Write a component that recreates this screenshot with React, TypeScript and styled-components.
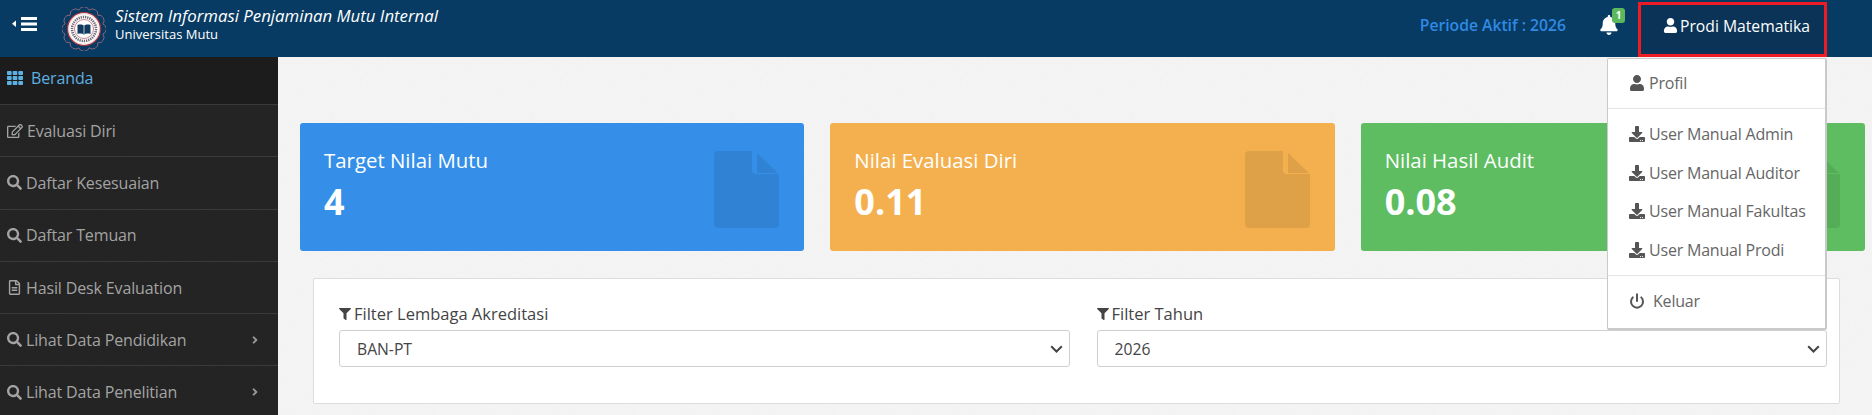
import React from 'react';
import styled, { createGlobalStyle } from 'styled-components';
import { Power } from 'lucide-react';
import {
  FaAngleRight,
  FaBell,
  FaDownload,
  FaFilter,
  FaRegEdit,
  FaRegFileAlt,
  FaSearch,
  FaTh,
  FaUser,
} from 'react-icons/fa';

const grain = (alpha: number, tone: number) =>
  `url("data:image/svg+xml,%3Csvg xmlns='http://www.w3.org/2000/svg' width='200' height='200'%3E%3Cfilter id='n'%3E%3CfeTurbulence type='fractalNoise' baseFrequency='0.8' numOctaves='2'/%3E%3CfeColorMatrix values='0 0 0 0 ${tone} 0 0 0 0 ${tone} 0 0 0 0 ${tone} 0 0 0 ${alpha} 0'/%3E%3C/filter%3E%3Crect width='200' height='200' filter='url(%23n)'/%3E%3C/svg%3E")`;

const chevron = `url("data:image/svg+xml,%3Csvg xmlns='http://www.w3.org/2000/svg' viewBox='0 0 13 8'%3E%3Cpath d='M1.200 1.200l5.300 5.300 5.300-5.300' fill='none' stroke='%23444' stroke-width='2'/%3E%3C/svg%3E")`;

const GlobalStyle = createGlobalStyle`
  html, body {
    margin: 0;
    padding: 0;
    height: 415px;
    overflow: hidden;
    background: #f7f7f7;
    font-family: 'Open Sans', 'Liberation Sans', sans-serif;
  }
  * { box-sizing: border-box; }
`;

const Page = styled.div`
  width: 1872px;
  height: 415px;
  display: flex;
  flex-direction: column;
  overflow: hidden;
`;

const Header = styled.header`
  flex: 0 0 57px;
  display: flex;
  align-items: center;
  background: #073b63;
  color: #fff;
`;

const Toggle = styled.svg`
  width: 25px;
  height: 14px;
  margin: -9px 25px 0 12px;
`;

const Seal = styled.svg`
  width: 44px;
  height: 44px;
  margin: 0 9px 0 0;
`;

const Brand = styled.div`
  display: flex;
  flex-direction: column;
`;

const BrandTitle = styled.div`
  font-size: 16.8px;
  font-style: italic;
  line-height: 21px;
  margin-top: -9px;
`;

const BrandSub = styled.div`
  font-size: 13px;
  line-height: 17px;
`;

const HeaderRight = styled.div`
  margin-left: auto;
  height: 100%;
  display: flex;
  align-items: center;
  padding-right: 45px;
`;

const Period = styled.span`
  margin-top: -8px;
  font-size: 15.7px;
  font-weight: 600;
  color: #2f8ae4;
`;

const BellWrap = styled.div`
  position: relative;
  display: flex;
  margin: -8px 19px 0 33px;
  font-size: 20px;
`;

const BellBadge = styled.span`
  position: absolute;
  top: -7px;
  right: -6px;
  width: 13px;
  height: 15px;
  border-radius: 3px;
  background: #5cb85c;
  color: #fff;
  font-size: 10px;
  font-weight: 700;
  line-height: 15px;
  text-align: center;
`;

const UserMenu = styled.div`
  position: relative;
  width: 189px;
  height: 55px;
  margin-top: 1px;
  display: flex;
  align-items: center;
  gap: 2px;
  padding: 0 0 7px 22px;
  background: #0a3357;
  border: 3px solid #ed1c24;
  font-size: 15.7px;
`;

const Dropdown = styled.div`
  position: absolute;
  top: 53px;
  right: -3px;
  width: 220px;
  z-index: 10;
  padding: 5px 0 7px;
  background: #fff;
  border: 1px solid #c9c9c9;
  border-width: 1px 2px 2px 1px;
  border-radius: 2px;
`;

const MenuItem = styled.div`
  height: 38.5px;
  display: flex;
  align-items: center;
  gap: 4px;
  padding-left: 21px;
  color: #666;
  font-size: 16px;
  letter-spacing: -0.2px;
  svg { color: #555; flex: none; }
`;

const MenuDivider = styled.div`
  height: 1px;
  margin: 6px 0;
  background: #e5e5e5;
`;

const Body = styled.div`
  flex: 1;
  display: flex;
  min-height: 0;
  background-color: #f7f7f7;
  background-image: ${grain(0.03, 0)};
`;

const Sidebar = styled.nav`
  flex: 0 0 278px;
  background-color: #262626;
  background-image: ${grain(0.12, 0)};
`;

const SideItem = styled.div<{ $active?: boolean }>`
  height: ${(p) => (p.$active ? '48px' : '52.3px')};
  display: flex;
  align-items: center;
  gap: 4px;
  padding: ${(p) => (p.$active ? '0 0 6px 7px' : '0 0 0 7px')};
  background: ${(p) => (p.$active ? 'rgba(0, 0, 0, 0.2)' : 'transparent')};
  border-bottom: 1px solid #3a3a3a;
  color: ${(p) => (p.$active ? '#5cb0e2' : '#a3a3a3')};
  font-size: 16px;
  letter-spacing: -0.14px;
  svg { flex: none; }
`;

const SideArrow = styled(FaAngleRight)`
  margin-left: auto;
  margin-right: 17px;
  font-size: 12px;
  color: #999;
`;

const Main = styled.main`
  flex: 1;
  padding: 66px 7px 0 22px;
`;

const Cards = styled.div`
  display: grid;
  grid-template-columns: repeat(3, 1fr);
  gap: 26px;
`;

const Card = styled.div<{ $color: string }>`
  height: 128px;
  display: flex;
  justify-content: space-between;
  align-items: center;
  padding: 0 25px 0 24px;
  border-radius: 3px;
  background: ${(p) => p.$color};
  color: #fff;
`;

const CardText = styled.div`
  padding-bottom: 3px;
`;

const CardLabel = styled.div`
  font-size: 20.4px;
  line-height: 24px;
`;

const CardValue = styled.div`
  margin-top: 8px;
  font-size: 36px;
  font-weight: 700;
  line-height: 44px;
`;

const CardIcon = styled.svg`
  width: 65px;
  height: 77px;
  margin-top: 5px;
  opacity: 0.08;
`;

const FilterPanel = styled.section`
  display: grid;
  grid-template-columns: 1fr 1fr;
  gap: 27px;
  height: 126px;
  margin: 27px 25px 0 13px;
  padding: 25px 12px 0 25px;
  background: #fff;
  border: 1px solid #dcdcdc;
  border-radius: 2px;
`;

const Field = styled.div`
  display: flex;
  flex-direction: column;
`;

const FieldLabel = styled.label`
  display: flex;
  align-items: center;
  gap: 3px;
  height: 27px;
  margin-top: -1px;
  padding-bottom: 6px;
  color: #444;
  font-size: 16.5px;
  font-weight: 500;
`;

const Select = styled.select`
  width: 100%;
  height: 37px;
  padding: 0 30px 0 17px;
  appearance: none;
  background: #fff ${chevron} no-repeat right 6px center / 13px 8px;
  border: 1px solid #cfcfcf;
  border-radius: 3px;
  color: #444;
  font-family: inherit;
  font-size: 15.7px;
`;

const sideItems = [
  { label: 'Evaluasi Diri', icon: <FaRegEdit size={16} /> },
  { label: 'Daftar Kesesuaian', icon: <FaSearch size={15} /> },
  { label: 'Daftar Temuan', icon: <FaSearch size={15} /> },
  { label: 'Hasil Desk Evaluation', icon: <FaRegFileAlt size={15} /> },
  { label: 'Lihat Data Pendidikan', icon: <FaSearch size={15} />, more: true },
  { label: 'Lihat Data Penelitian', icon: <FaSearch size={15} />, more: true },
];

const cards = [
  { label: 'Target Nilai Mutu', value: '4', color: '#358fe8' },
  { label: 'Nilai Evaluasi Diri', value: '0.11', color: '#f4b04f' },
  { label: 'Nilai Hasil Audit', value: '0.08', color: '#5dbd60' },
];

const manuals = ['Admin', 'Auditor', 'Fakultas', 'Prodi'];

// scalloped edge of the university seal
const scallopPath = () => {
  const pts = Array.from({ length: 12 }, (_, i) => {
    const a = ((i + 0.5) * Math.PI) / 6;
    return `${(22 + 19.5 * Math.cos(a)).toFixed(2)} ${(22 + 19.5 * Math.sin(a)).toFixed(2)}`;
  });
  return `M${pts[0]} ` + pts.slice(1).concat(pts[0]).map((p) => `A5.4 5.4 0 0 1 ${p}`).join(' ') + 'Z';
};

const App = () => {
  return (
    <Page>
      <GlobalStyle />
      <Header>
        <Toggle viewBox="0 0 25 14" fill="#fff">
          <path d="M4 3.500V10L0 6.800z" />
          <rect x="9" y="0" width="16" height="3" />
          <rect x="9" y="5.500" width="16" height="3" />
          <rect x="9" y="11" width="16" height="3" />
        </Toggle>
        <Seal viewBox="0 0 44 44">
          <path d={scallopPath()} fill="none" stroke="#a9707c" strokeWidth="0.8" />
          <circle cx="22" cy="22" r="16.500" fill="#f6e4e0" stroke="#a8333f" strokeWidth="1.200" />
          <circle cx="22" cy="22" r="14.500" fill="#fff" />
          <circle cx="22" cy="22" r="12" fill="none" stroke="#6f6a78" strokeWidth="2.600" strokeDasharray="1.300 0.900" />
          <circle cx="22" cy="22" r="9.500" fill="#fff" stroke="#b0505a" strokeWidth="0.700" />
          <path d="M15.500 18c2.600-.8 5.400-.4 6.500 1 1.100-1.400 3.900-1.800 6.500-1v9c-2.600-.8-5.400-.4-6.500 1-1.100-1.400-3.900-1.800-6.500-1z" fill="#123a5e" />
          <path d="M22 19v9" stroke="#fff" strokeWidth="0.700" />
        </Seal>
        <Brand>
          <BrandTitle>Sistem Informasi Penjaminan Mutu Internal</BrandTitle>
          <BrandSub>Universitas Mutu</BrandSub>
        </Brand>
        <HeaderRight>
          <Period>Periode Aktif : 2026</Period>
          <BellWrap>
            <FaBell />
            <BellBadge>1</BellBadge>
          </BellWrap>
          <UserMenu>
            <FaUser size={15} />
            Prodi Matematika
            <Dropdown>
              <MenuItem>
                <FaUser size={16} />
                Profil
              </MenuItem>
              <MenuDivider />
              {manuals.map((m) => (
                <MenuItem key={m}>
                  <FaDownload size={16} />
                  User Manual {m}
                </MenuItem>
              ))}
              <MenuDivider />
              <MenuItem>
                <Power size={16} strokeWidth={3} style={{ marginRight: 4 }} />
                Keluar
              </MenuItem>
            </Dropdown>
          </UserMenu>
        </HeaderRight>
      </Header>
      <Body>
        <Sidebar>
          <SideItem $active>
            <FaTh size={16} />
            &nbsp;Beranda
          </SideItem>
          {sideItems.map((item) => (
            <SideItem key={item.label}>
              {item.icon}
              {item.label}
              {item.more && <SideArrow />}
            </SideItem>
          ))}
        </Sidebar>
        <Main>
          <Cards>
            {cards.map((c) => (
              <Card key={c.label} $color={c.color}>
                <CardText>
                  <CardLabel>{c.label}</CardLabel>
                  <CardValue>{c.value}</CardValue>
                </CardText>
                <CardIcon viewBox="0 0 65 77" fill="#000">
                  <path d="M4 0H38V19a4 4 0 0 0 4 4H65V73a4 4 0 0 1-4 4H4a4 4 0 0 1-4-4V4a4 4 0 0 1 4-4z" />
                  <path d="M43 2L64 22H43z" />
                </CardIcon>
              </Card>
            ))}
          </Cards>
          <FilterPanel>
            <Field>
              <FieldLabel>
                <FaFilter size={12} />
                Filter Lembaga Akreditasi
              </FieldLabel>
              <Select defaultValue="BAN-PT">
                <option>BAN-PT</option>
              </Select>
            </Field>
            <Field>
              <FieldLabel>
                <FaFilter size={12} />
                Filter Tahun
              </FieldLabel>
              <Select defaultValue="2026">
                <option>2026</option>
              </Select>
            </Field>
          </FilterPanel>
        </Main>
      </Body>
    </Page>
  );
};

export default App;
